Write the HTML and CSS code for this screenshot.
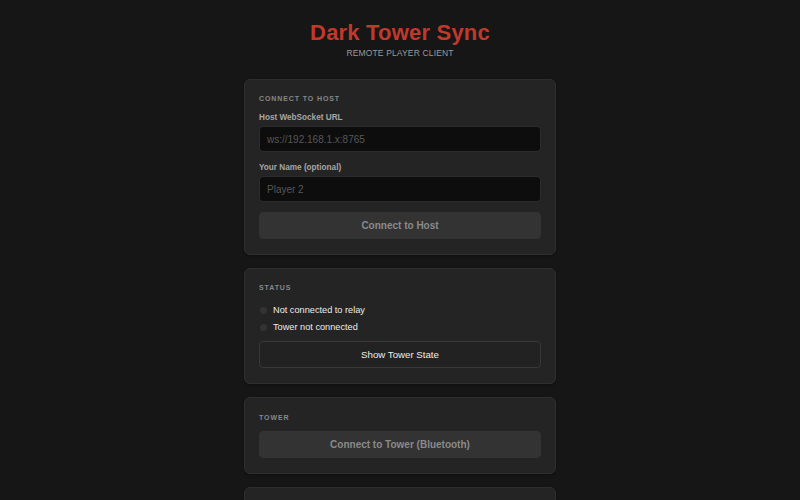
FILE: index.html
```html
<!DOCTYPE html>
<html lang="en">
<head>
<meta charset="utf-8">
<title>Dark Tower Sync</title>
<link rel="stylesheet" href="styles.css">
</head>
<body>
<main class="app">
  <header class="header">
    <h1 class="title">Dark Tower Sync</h1>
    <p class="subtitle">REMOTE PLAYER CLIENT</p>
  </header>

  <section class="card">
    <h2 class="card-title">CONNECT TO HOST</h2>
    <div class="field">
      <label class="field-label">Host WebSocket URL</label>
      <input class="input" type="text" placeholder="ws://192.168.1.x:8765">
    </div>
    <div class="field">
      <label class="field-label">Your Name (optional)</label>
      <input class="input" type="text" placeholder="Player 2">
    </div>
    <button class="btn btn-primary">Connect to Host</button>
  </section>

  <section class="card">
    <h2 class="card-title card-title-status">STATUS</h2>
    <ul class="status-list">
      <li class="status-row"><span class="dot"></span>Not connected to relay</li>
      <li class="status-row"><span class="dot"></span>Tower not connected</li>
    </ul>
    <button class="btn btn-outline">Show Tower State</button>
  </section>

  <section class="card">
    <h2 class="card-title card-title-tower">TOWER</h2>
    <button class="btn btn-primary">Connect to Tower (Bluetooth)</button>
  </section>

  <section class="card card-more"></section>
</main>
</body>
</html>
```

FILE: styles.css
```css
* { box-sizing: border-box; }

html, body {
  margin: 0;
  padding: 0;
  background: #161616;
  font-family: "Liberation Sans", Arial, sans-serif;
  color: #ddd;
  height: 100%;
  overflow: hidden;
}

.app {
  width: 312px;
  margin: 0 auto;
  display: flex;
  flex-direction: column;
  gap: 13px;
}

.header {
  padding-top: 20px;
  text-align: center;
  margin-bottom: 7px;
}

.title {
  margin: 0;
  font-size: 22px;
  line-height: 26px;
  font-weight: 700;
  letter-spacing: 0.2px;
  color: #c0392b;
}

.subtitle {
  margin: 1px 0 0;
  font-size: 8.5px;
  line-height: 12px;
  letter-spacing: 0.15px;
  color: #9a9a9a;
}

.card {
  background: #242424;
  border: 1px solid #2f2f2f;
  border-radius: 6px;
  padding: 14px 14px 15px;
  box-shadow: 0 1px 3px rgba(0, 0, 0, 0.35);
}

.card-more { height: 60px; }

.card-title {
  margin: 0 0 9px;
  font-size: 7px;
  line-height: 9px;
  font-weight: 700;
  letter-spacing: 0.9px;
  color: #888;
}

.card-title-status { margin-bottom: 12px; }
.card-title-tower { margin-top: 1px; margin-bottom: 9px; }

.field {
  display: flex;
  flex-direction: column;
  gap: 3px;
  margin-bottom: 10px;
}

.field + .btn { margin-top: 2px; }

.field-label {
  font-size: 8.2px;
  line-height: 11px;
  font-weight: 700;
  color: #a6a6a6;
}

.input {
  height: 26px;
  width: 100%;
  background: #0d0d0d;
  border: 1px solid #2c2c2c;
  border-radius: 4px;
  padding: 0 7px;
  font-family: "Liberation Sans", Arial, sans-serif;
  font-size: 10px;
  color: #ddd;
  outline: none;
}

.input::placeholder { color: #575757; }

.btn {
  display: block;
  width: 100%;
  height: 27px;
  border-radius: 4px;
  font-family: "Liberation Sans", Arial, sans-serif;
  font-size: 10px;
  cursor: pointer;
}

.btn-primary {
  background: #333;
  border: 1px solid #333;
  color: #8a8a8a;
  font-weight: 700;
}

.btn-outline {
  background: #222;
  border: 1px solid #383838;
  color: #eee;
  font-size: 9.7px;
}

.status-list {
  list-style: none;
  margin: 0 0 7px;
  padding: 0;
  display: flex;
  flex-direction: column;
  gap: 4px;
}

.status-row {
  display: flex;
  align-items: center;
  gap: 6px;
  font-size: 9.2px;
  line-height: 13px;
  color: #ececec;
}

.dot {
  width: 7px;
  height: 7px;
  border-radius: 50%;
  background: #333;
  margin-left: 1px;
}
```
